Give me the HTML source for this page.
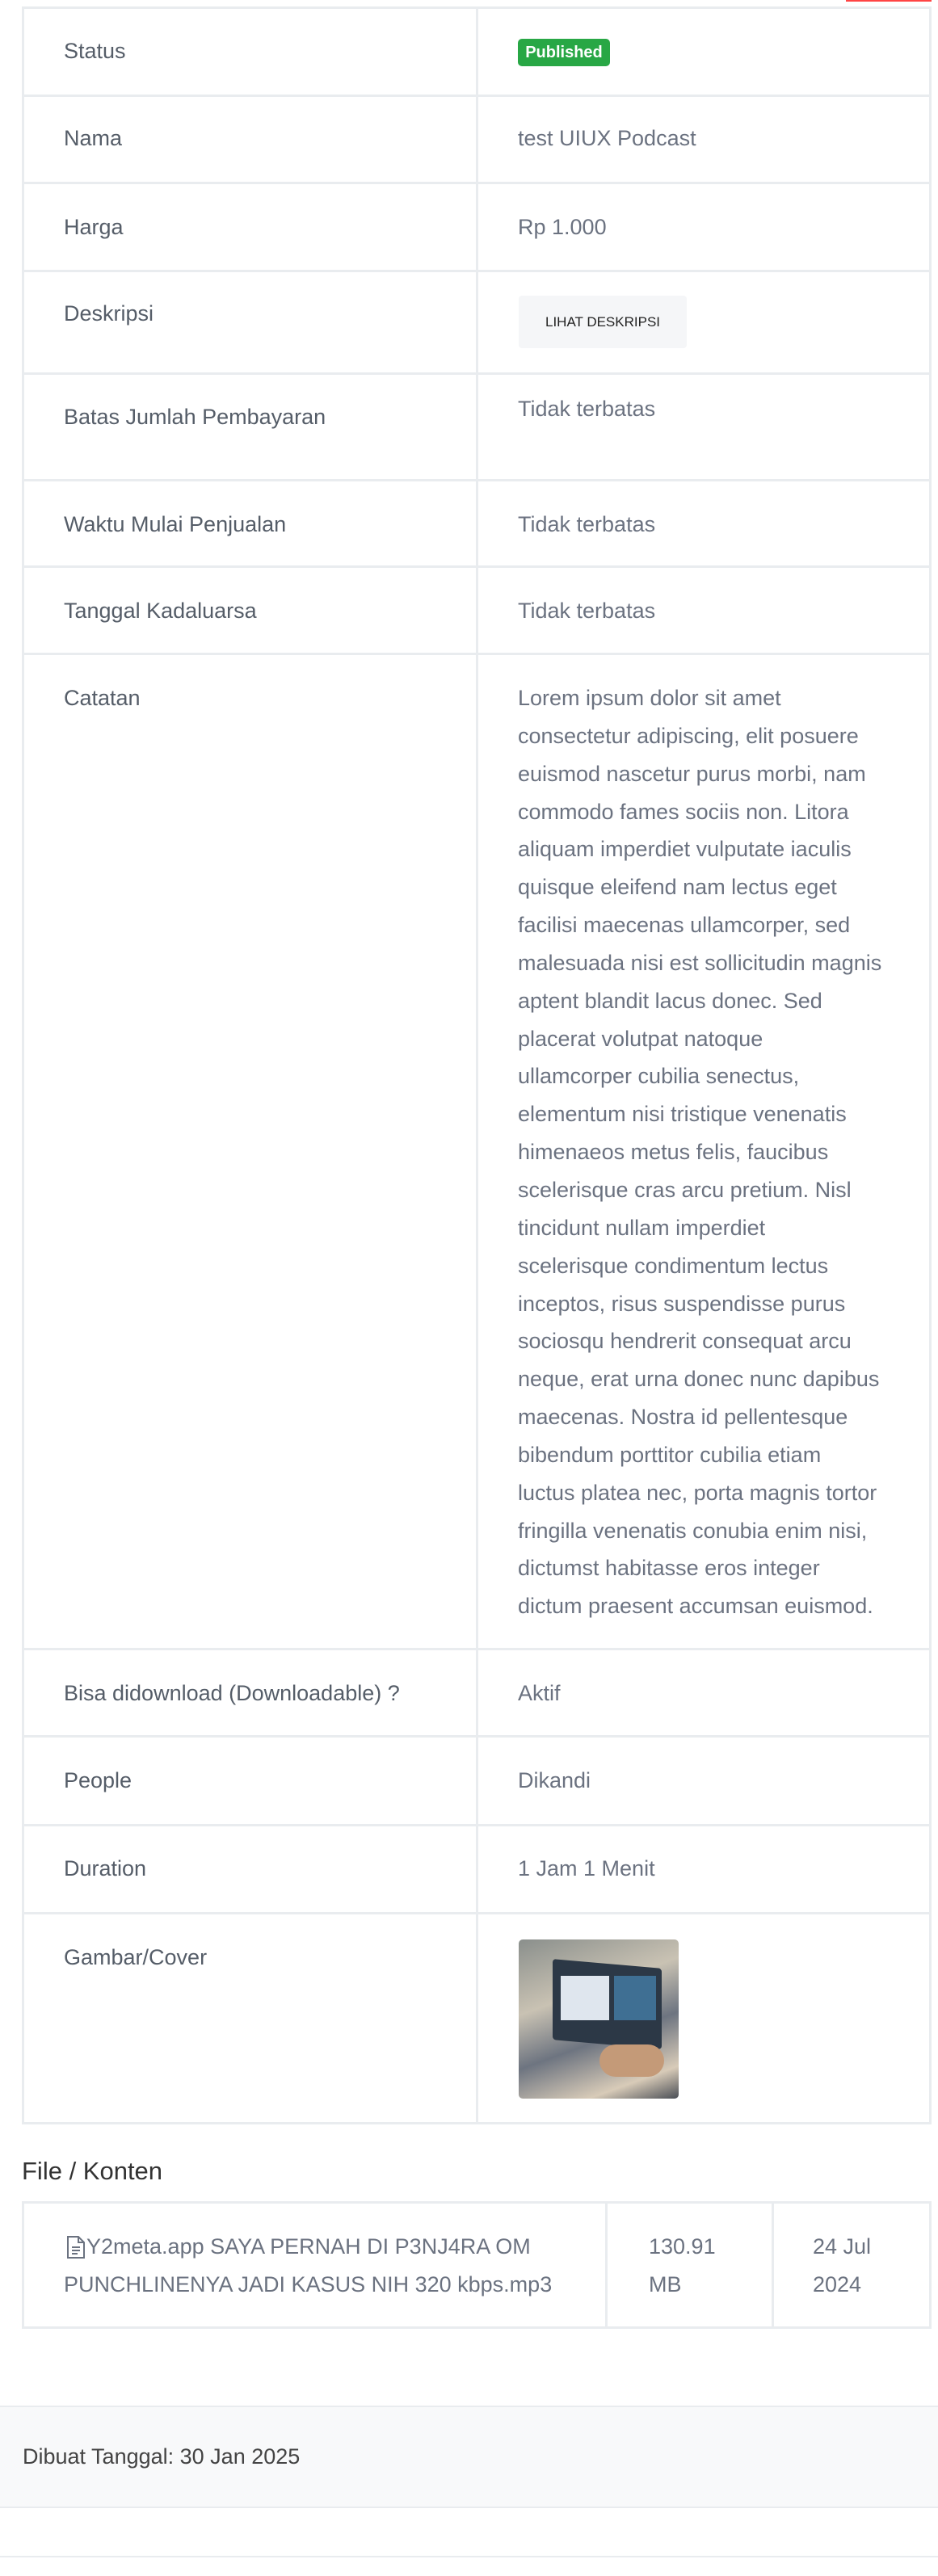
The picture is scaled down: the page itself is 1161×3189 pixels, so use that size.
<!DOCTYPE html>
<html><head><meta charset="utf-8">
<style>
*{margin:0;padding:0;box-sizing:border-box}
body{width:1161px;height:3189px;background:#fff;font-family:"Liberation Sans",sans-serif;position:relative;overflow:hidden}
.a{position:absolute}
.h{position:absolute;left:27px;width:1126px;height:3px;background:#e9ecef}
.v{position:absolute;width:3px;background:#e9ecef}
.l{position:absolute;left:79px;font-size:27px;color:#555d68;line-height:47px;white-space:nowrap}
.t{position:absolute;left:641px;font-size:27px;color:#6b7280;line-height:47px;white-space:nowrap}
</style></head><body>
<div class="a" style="left:1047px;top:0;width:106px;height:2px;background:#f44"></div>
<div class="h" style="top:8px"></div>
<div class="h" style="top:117px"></div>
<div class="h" style="top:225px"></div>
<div class="h" style="top:334px"></div>
<div class="h" style="top:461px"></div>
<div class="h" style="top:593px"></div>
<div class="h" style="top:700px"></div>
<div class="h" style="top:808px"></div>
<div class="h" style="top:2040px"></div>
<div class="h" style="top:2148px"></div>
<div class="h" style="top:2258px"></div>
<div class="h" style="top:2367px"></div>
<div class="h" style="top:2627px"></div>
<div class="v" style="left:27px;top:8px;height:2622px"></div>
<div class="v" style="left:589px;top:8px;height:2622px"></div>
<div class="v" style="left:1150px;top:8px;height:2622px"></div>

<div class="l" style="top:40px">Status</div>
<div class="a" style="left:641px;top:48px;width:114px;height:34px;background:#28a745;border-radius:5px;color:#fff;font-size:20px;font-weight:bold;line-height:34px;text-align:center">Published</div>
<div class="l" style="top:148px">Nama</div><div class="t" style="top:148px">test UIUX Podcast</div>
<div class="l" style="top:258px">Harga</div><div class="t" style="top:258px">Rp 1.000</div>
<div class="l" style="top:365px">Deskripsi</div>
<div class="a" style="left:642px;top:366px;width:208px;height:65px;background:#f5f6f8;border-radius:4px;font-size:17px;color:#222;line-height:65px;text-align:center">LIHAT DESKRIPSI</div>
<div class="l" style="top:493px">Batas Jumlah Pembayaran</div><div class="t" style="top:483px">Tidak terbatas</div>
<div class="l" style="top:626px">Waktu Mulai Penjualan</div><div class="t" style="top:626px">Tidak terbatas</div>
<div class="l" style="top:733px">Tanggal Kadaluarsa</div><div class="t" style="top:733px">Tidak terbatas</div>
<div class="l" style="top:841px">Catatan</div>
<div class="t" style="top:841px;line-height:46.85px">Lorem ipsum dolor sit amet<br>consectetur adipiscing, elit posuere<br>euismod nascetur purus morbi, nam<br>commodo fames sociis non. Litora<br>aliquam imperdiet vulputate iaculis<br>quisque eleifend nam lectus eget<br>facilisi maecenas ullamcorper, sed<br>malesuada nisi est sollicitudin magnis<br>aptent blandit lacus donec. Sed<br>placerat volutpat natoque<br>ullamcorper cubilia senectus,<br>elementum nisi tristique venenatis<br>himenaeos metus felis, faucibus<br>scelerisque cras arcu pretium. Nisl<br>tincidunt nullam imperdiet<br>scelerisque condimentum lectus<br>inceptos, risus suspendisse purus<br>sociosqu hendrerit consequat arcu<br>neque, erat urna donec nunc dapibus<br>maecenas. Nostra id pellentesque<br>bibendum porttitor cubilia etiam<br>luctus platea nec, porta magnis tortor<br>fringilla venenatis conubia enim nisi,<br>dictumst habitasse eros integer<br>dictum praesent accumsan euismod.</div>
<div class="l" style="top:2073px">Bisa didownload (Downloadable) ?</div><div class="t" style="top:2073px">Aktif</div>
<div class="l" style="top:2181px">People</div><div class="t" style="top:2181px">Dikandi</div>
<div class="l" style="top:2290px">Duration</div><div class="t" style="top:2290px">1 Jam 1 Menit</div>
<div class="l" style="top:2400px">Gambar/Cover</div>
<div class="a" style="left:642px;top:2401px;width:198px;height:197px;border-radius:5px;overflow:hidden;background:linear-gradient(160deg,#8a8f8c 0%,#c9c2b3 35%,#6d7480 60%,#d8cbb8 85%,#4a4e55 100%)">
 <div class="a" style="left:42px;top:30px;width:135px;height:100px;background:#2c3846;border-radius:4px;transform:skewY(5deg)"></div>
 <div class="a" style="left:52px;top:45px;width:60px;height:55px;background:#dfe6ee"></div>
 <div class="a" style="left:118px;top:45px;width:52px;height:55px;background:#3f6f93"></div>
 <div class="a" style="left:100px;top:130px;width:80px;height:40px;background:#c49a78;border-radius:20px"></div>
</div>

<div class="a" style="left:27px;top:2667px;font-size:31px;color:#333;line-height:42px">File / Konten</div>
<div class="a" style="left:27px;top:2725px;width:1126px;height:158px;border:3px solid #e9ecef"></div>
<div class="v" style="left:749px;top:2725px;height:158px"></div>
<div class="v" style="left:955px;top:2725px;height:158px"></div>
<svg class="a" style="left:81px;top:2767px" width="26" height="30" viewBox="0 0 26 30"><path d="M3 2h13l7 7v19H3z" fill="none" stroke="#6b7280" stroke-width="2"/><path d="M16 2v7h7M8 15h10M8 19h10M8 23h7" fill="none" stroke="#6b7280" stroke-width="2"/></svg>
<div class="t" style="left:107px;top:2758px">Y2meta.app SAYA PERNAH DI P3NJ4RA OM</div>
<div class="t" style="left:79px;top:2805px">PUNCHLINENYA JADI KASUS NIH 320 kbps.mp3</div>
<div class="t" style="left:803px;top:2758px">130.91<br>MB</div>
<div class="t" style="left:1006px;top:2758px">24 Jul<br>2024</div>

<div class="a" style="left:0;top:2978px;width:1161px;height:127px;background:#f8f9fa;border-top:2px solid #e9ecef;border-bottom:2px solid #e9ecef"></div>
<div class="a" style="left:28px;top:3018px;font-size:27px;color:#444;line-height:47px">Dibuat Tanggal: 30 Jan 2025</div>
<div class="a" style="left:0;top:3164px;width:1161px;height:2px;background:#e9ecef"></div>
</body></html>
